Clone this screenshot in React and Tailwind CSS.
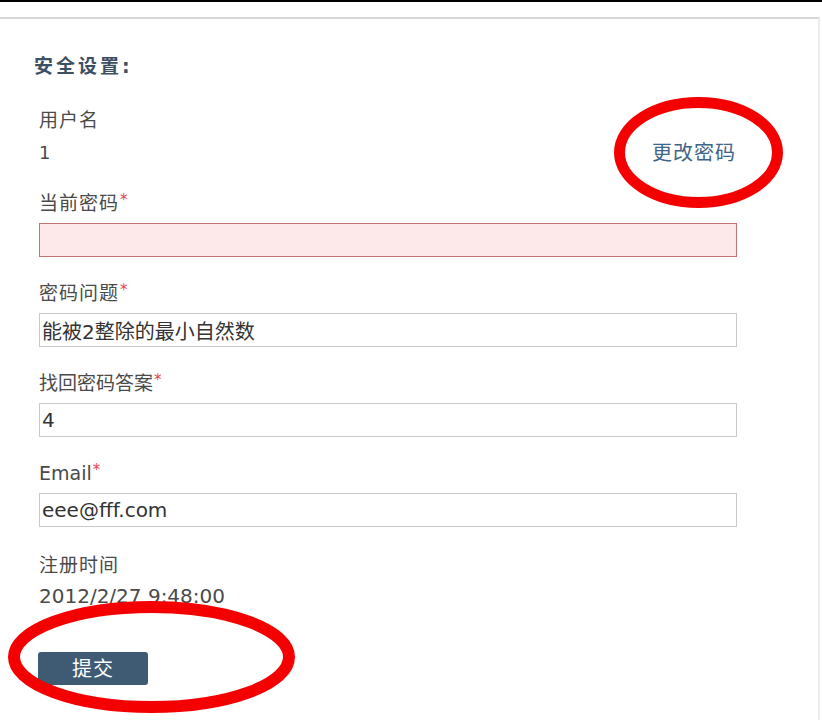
import React from 'react';

const font = 'font-["DejaVu_Sans","Noto_Sans_CJK_SC",sans-serif]';

const Label = ({ children, required, latin }) => (
  <div className={`text-[19px] leading-[24px] text-[#4a4a4a] h-[24px] ${latin ? 'text-[18px] tracking-normal' : 'tracking-[1px]'}`}>
    {children}
    {required && <span className="text-[#e8414a] text-[15px] align-top relative top-[-3px] ml-[1px]">*</span>}
  </div>
);

const Field = ({ label, value, error, latin, className = '' }) => (
  <div className={className}>
    <Label required latin={latin}>{label}</Label>
    <input
      readOnly
      defaultValue={value}
      className={`mt-[8px] block w-[698px] h-[34px] px-[2px] text-[20px] text-[#333] outline-none border ${
        latin ? 'text-[19px]' : ''
      } ${error ? 'bg-[#fde9e9] border-[#c37373]' : 'bg-white border-[#c9c9c9]'}`}
    />
  </div>
);

export default function App() {
  return (
    <div className={`relative w-[822px] h-[720px] bg-white overflow-hidden ${font}`}>
      <div className="h-[2px] bg-black" />
      <div className="mt-[15px] w-[820px] h-[703px] border-t-2 border-t-[#d6d6d6] border-r-2 border-r-[#ececec] pl-[34px] pt-[35px]">
        <h2 className="text-[19px] leading-[24px] font-bold tracking-[3px] text-[#3c4f63]">安全设置:</h2>

        <div className="pl-[5px]">
          <div className="mt-[30px] w-[698px] flex justify-between items-end">
            <div>
              <Label>用户名</Label>
              <div className="mt-[9px] text-[18px] leading-[24px] text-[#4a4a4a]">1</div>
            </div>
            <a className="text-[20px] leading-[24px] text-[#3d6587] tracking-[1px] pr-[1px]">更改密码</a>
          </div>

          <Field className="mt-[26px]" label="当前密码" value="" error />
          <Field className="mt-[24px]" label="密码问题" value="能被2整除的最小自然数" />
          <Field className="mt-[24px]" label="找回密码答案" value="4" latin />
          <Field className="mt-[24px]" label="Email" value="eee@fff.com" latin />

          <div className="mt-[26px]">
            <Label>注册时间</Label>
            <div className="mt-[7px] text-[20px] leading-[24px] text-[#4a4a4a]">2012/2/27 9:48:00</div>
          </div>

          <button className="mt-[44px] ml-[-1px] w-[110px] h-[33px] rounded-[3px] bg-[#3e5b73] text-white text-[20px] tracking-[1px]">
            提交
          </button>
        </div>
      </div>

      <svg className="absolute left-0 top-0 pointer-events-none" width="822" height="720">
        <ellipse cx="698.5" cy="152.5" rx="79" ry="50" fill="none" stroke="#f40000" strokeWidth="11" />
        <ellipse cx="151.5" cy="657" rx="137.5" ry="50" fill="none" stroke="#f40000" strokeWidth="12" />
      </svg>
    </div>
  );
}
